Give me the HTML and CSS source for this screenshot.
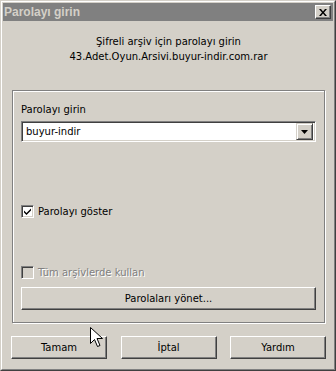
FILE: index.html
```
<!DOCTYPE html>
<html>
<head>
  <title>Parolayı girin</title>
  <link rel="stylesheet" href="styles.css">
</head>
<body>
  <div class="window">
    <div class="frame">
      <div class="titlebar">
        <span class="title">Parolayı girin</span>
        <span class="close-btn">
          <svg width="8" height="7" viewBox="0 0 8 7">
            <path d="M0 0h2l2 2.5L6 0h2L5 3.5 8 7H6L4 4.5 2 7H0l3-3.5z" fill="#000"/>
          </svg>
        </span>
      </div>

      <div class="content">
        <div class="message">
          <div>Şifreli arşiv için parolayı girin</div>
          <div>43.Adet.Oyun.Arsivi.buyur-indir.com.rar</div>
        </div>

        <div class="group">
          <div class="label">Parolayı girin</div>
          <div class="combo">
            <span class="combo-text">buyur-indir</span>
            <span class="combo-btn">
              <svg width="7" height="4" viewBox="0 0 7 4"><path d="M0 0h7L3.5 4z" fill="#000"/></svg>
            </span>
          </div>

          <label class="check check-show">
            <span class="box">
              <svg width="9" height="9" viewBox="0 0 9 9"><path d="M1 3.5l2.5 2.5L8 1.5v2L3.5 8 1 5.5z" fill="#000"/></svg>
            </span>
            <span>Parolayı göster</span>
          </label>

          <label class="check check-disabled">
            <span class="box"></span>
            <span>Tüm arşivlerde kullan</span>
          </label>

          <div class="button wide">Parolaları yönet...</div>
        </div>

        <div class="buttons">
          <div class="button">Tamam</div>
          <div class="button">İptal</div>
          <div class="button">Yardım</div>
        </div>
      </div>
    </div>

    <!-- mouse pointer -->
    <svg class="cursor" width="13" height="21" viewBox="0 0 13 21">
      <path d="M0.5 0.5v16l4-4 3 7 2.5-1-3-7h5.5z" fill="#fff" stroke="#000" stroke-width="1"/>
    </svg>
  </div>
</body>
</html>
```

FILE: styles.css
```
body {
  margin: 0;
  background-color: #d4d0c8;
  font-family: "DejaVu Sans", Verdana, sans-serif;
  font-size: 10px;
  color: #000;
}

.window {
  position: relative;
  width: 336px;
  height: 371px;
  box-sizing: border-box;
  border: 1px solid;
  border-color: #d4d0c8 #404040 #404040 #d4d0c8;
  background-color: #d4d0c8;
}

.frame {
  height: 100%;
  box-sizing: border-box;
  border: 1px solid;
  border-color: #fff #808080 #808080 #fff;
  padding: 1px;
}

.titlebar {
  height: 18px;
  background-color: #808080;
  display: flex;
  align-items: center;
  justify-content: space-between;
  padding: 0 2px 0 1px;
}

.title {
  color: #d4d0c8;
  font-family: "Liberation Sans", Arial, sans-serif;
  font-weight: bold;
  font-size: 12px;
}

.close-btn {
  width: 16px;
  height: 14px;
  box-sizing: border-box;
  border: 1px solid;
  border-color: #fff #404040 #404040 #fff;
  box-shadow: inset -1px -1px 0 #808080;
  background-color: #d4d0c8;
  display: flex;
  align-items: center;
  justify-content: center;
}

.content {
  padding: 0 7px 0 8px;
}

.message {
  text-align: center;
  line-height: 15px;
  padding-top: 13px;
  margin-bottom: 26px;
}

.group {
  margin-left: 1px;
  margin-right: 1px;
  height: 233px;
  box-sizing: border-box;
  border: 1px solid #808080;
  box-shadow: inset 1px 1px 0 #fff, 1px 1px 0 #fff;
  padding: 11px 8px 0 8px;
}

.label {
  line-height: 15px;
}

.combo {
  margin-top: 4px;
  height: 21px;
  box-sizing: border-box;
  border: 1px solid;
  border-color: #808080 #fff #fff #808080;
  box-shadow: inset 1px 1px 0 #404040, inset -1px -1px 0 #d4d0c8;
  background-color: #fff;
  display: flex;
  align-items: center;
  justify-content: space-between;
  padding: 2px;
}

.combo-text {
  padding-left: 2px;
}

.combo-btn {
  width: 17px;
  height: 17px;
  box-sizing: border-box;
  border: 1px solid;
  border-color: #d4d0c8 #404040 #404040 #d4d0c8;
  box-shadow: inset 1px 1px 0 #fff, inset -1px -1px 0 #808080;
  background-color: #d4d0c8;
  display: flex;
  align-items: center;
  justify-content: center;
}

.check {
  display: flex;
  align-items: center;
  gap: 4px;
  height: 13px;
}

.check-show {
  margin-top: 63px;
}

.check-disabled {
  margin-top: 48px;
  color: #808080;
}

.check-disabled span:last-child {
  text-shadow: 1px 1px 0 #fff;
}

.box {
  width: 13px;
  height: 13px;
  box-sizing: border-box;
  border: 1px solid;
  border-color: #808080 #fff #fff #808080;
  box-shadow: inset 1px 1px 0 #404040, inset -1px -1px 0 #d4d0c8;
  background-color: #fff;
  display: flex;
  align-items: center;
  justify-content: center;
}

.check-disabled .box {
  background-color: #d4d0c8;
}

.button {
  height: 23px;
  width: 96px;
  box-sizing: border-box;
  border: 1px solid;
  border-color: #fff #404040 #404040 #fff;
  box-shadow: inset -1px -1px 0 #808080;
  background-color: #d4d0c8;
  display: flex;
  align-items: center;
  justify-content: center;
}

.button.wide {
  width: auto;
  margin-top: 8px;
}

.buttons {
  display: flex;
  justify-content: space-between;
  margin-top: 13px;
}

.cursor {
  position: absolute;
  left: 89px;
  top: 326px;
}
```
